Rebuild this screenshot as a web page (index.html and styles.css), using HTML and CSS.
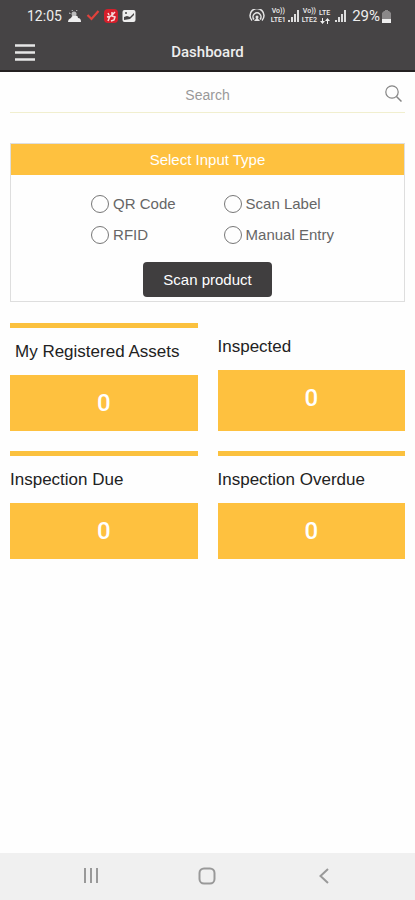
FILE: index.html
```html
<!DOCTYPE html>
<html lang="en">
<head>
<meta charset="utf-8">
<meta name="viewport" content="width=device-width, initial-scale=1">
<title>Dashboard</title>
<link rel="stylesheet" href="styles.css">
</head>
<body>
<header class="top">
  <div class="status">
    <div class="status-left">
      <span class="clock">12:05</span>
      <svg width="14" height="12" viewBox="0 0 14 12" aria-hidden="true"><circle cx="6" cy="4" r="2.500" fill="#bbb"/><path d="M0 12q0-3 3-4 1-3 4-2 3-1 3 2 3 0 3 4z" fill="#eee"/><path d="M1 3l1.500.5M4 0l.5 1M9 0l-.5 1" stroke="#ccc"/></svg>
      <svg width="14" height="12" viewBox="0 0 14 12" aria-hidden="true"><path d="M1.500 5l4 4 7-8" fill="none" stroke="#e0423c" stroke-width="2.200"/></svg>
      <svg width="14" height="14" viewBox="0 0 14 14" aria-hidden="true"><rect width="14" height="14" rx="4" fill="#d51f2b"/><path d="M4 4l1 2M3 8l4-1 4-4M6 7l-2 5M8 7l3 1-1 3-3 1M8 3v3" fill="none" stroke="#f7dada" stroke-width="1.500"/></svg>
      <svg width="14" height="12" viewBox="0 0 14 12" aria-hidden="true"><rect x=".5" width="13" height="12" rx="2" fill="#eee"/><path d="M2 10V7l3-1 3 1 4-4v2L8 9z" fill="#464445"/><circle cx="4" cy="3" r="1" fill="#464445"/></svg>
    </div>
    <div class="status-right">
      <svg class="hotspot" width="16" height="14" viewBox="0 0 16 14" fill="none" stroke="#e4e4e4" stroke-width="1.500" aria-hidden="true"><path d="M3 11.500a7 7 0 1 1 10 0M5 10.500a4 4 0 1 1 6 0"/><path d="M5 12l2.500-3h1l2.500 3z" fill="#e4e4e4" stroke="none"/><circle cx="8" cy="8" r="1.500" fill="#e4e4e4" stroke="none"/></svg>
      <span class="net"><span>Vo))</span><span>LTE1</span></span>
      <svg width="12" height="12" viewBox="0 0 12 12" fill="#ddd" aria-hidden="true"><path d="M0 10h2v2H0zM3 7h2v5H3zM6 4h2v8H6zM9 0h2v12H9z"/></svg>
      <span class="net"><span>Vo))</span><span>LTE2</span></span>
      <span class="net"><span>LTE</span><svg width="10" height="6" viewBox="0 0 10 6" fill="#eee" aria-hidden="true"><path d="M2 0h1v3h2L2.500 6 0 3h2zM7 6h1V3h2L7.500 0 5 3h2z"/></svg></span>
      <svg class="signal" width="12" height="12" viewBox="0 0 12 12" fill="#ddd" aria-hidden="true"><path d="M0 10h2v2H0zM3 7h2v5H3zM6 4h2v8H6zM9 0h2v12H9z"/></svg>
      <span class="battery">29%</span>
      <svg width="9" height="13" viewBox="0 0 9 13" aria-hidden="true"><path d="M3 0h3v1h1l2 2v6H0V3l2-2h1z" fill="#8a8889"/><path d="M0 9h9v4H0z" fill="#eee"/></svg>
    </div>
  </div>
  <div class="bar">
    <button class="menu" type="button" aria-label="Menu"><svg width="20" height="17" viewBox="0 0 20 17" aria-hidden="true"><path d="M0 1.500h20M0 8.500h20M0 15.500h20" stroke="#e6e6e6" stroke-width="2.500"/></svg></button>
    <h1>Dashboard</h1>
  </div>
</header>
<main>
  <form class="search" role="search">
    <input type="search" placeholder="Search" aria-label="Search">
    <button type="button" aria-label="Search"><svg width="18" height="18" viewBox="0 0 18 18" fill="none" stroke="#858585" aria-hidden="true"><circle cx="7" cy="7" r="6.200" stroke-width="1.200"/><path d="M11.500 11.500l5 5" stroke-width="1.500"/></svg></button>
  </form>
  <form class="panel">
    <h2>Select Input Type</h2>
    <div class="options">
      <label><input type="radio" name="kind">QR Code</label>
      <label><input type="radio" name="kind">Scan Label</label>
      <label><input type="radio" name="kind">RFID</label>
      <label><input type="radio" name="kind">Manual Entry</label>
    </div>
    <button class="scan" type="button">Scan product</button>
  </form>
  <div class="cards">
    <section class="card inset"><h3>My Registered Assets</h3><p>0</p></section>
    <section class="card plain"><h3>Inspected</h3><p>0</p></section>
    <section class="card"><h3>Inspection Due</h3><p>0</p></section>
    <section class="card"><h3>Inspection Overdue</h3><p>0</p></section>
  </div>
</main>
<nav class="keys" aria-label="System">
  <button type="button" aria-label="Recent apps"><svg width="18" height="18" viewBox="0 0 18 18" aria-hidden="true"><path d="M3 1v15M9 1v15M15 1v15" stroke="#999" stroke-width="2"/></svg></button>
  <button type="button" aria-label="Home"><svg width="18" height="18" viewBox="0 0 18 18" aria-hidden="true"><rect x="1.500" y="1.500" width="15" height="15" rx="4.500" fill="none" stroke="#999" stroke-width="2"/></svg></button>
  <button type="button" aria-label="Back"><svg width="18" height="18" viewBox="0 0 18 18" aria-hidden="true"><path d="M13 2L5.500 9l7.500 7" fill="none" stroke="#999" stroke-width="2"/></svg></button>
</nav>
</body>
</html>
```
FILE: styles.css
```css
* { box-sizing: border-box; }
body {
  margin: 0;
  min-height: 100vh;
  display: flex;
  flex-direction: column;
  background: #fefefe;
  color: #222;
  font-family: "Liberation Sans", Arial, sans-serif;
}
h1, h2, h3, p { margin: 0; font-weight: 400; }
button { border: 0; padding: 0; background: none; font: inherit; color: inherit; }
svg { display: block; flex: none; }

.top { background: #464445; color: #eee; border-bottom: 2px solid #242021; }
.status {
  display: flex;
  justify-content: space-between;
  align-items: center;
  height: 32px;
  padding: 0 24px 0 27px;
}
.status-left, .status-right { display: flex; align-items: center; }
.status-left { gap: 4px; }
.status-right { gap: 2px; }
.clock { margin-right: 2px; font: 14px/16px Roboto, sans-serif; }
.battery { font: 15px/16px Roboto, sans-serif; }
.hotspot { margin-right: 4px; }
.net {
  display: flex;
  flex-direction: column;
  align-items: center;
  font: 500 7px/9px Roboto, sans-serif;
}
.signal { margin: 0 3px; }
.bar {
  display: grid;
  grid-template-columns: 20px 1fr 20px;
  align-items: center;
  height: 38px;
  padding: 2px 15px 0;
}
.bar h1 { text-align: center; font: 500 15px/20px Roboto, sans-serif; }

main { flex: 1; padding: 0 10px; }
.search {
  display: grid;
  grid-template-columns: 20px 1fr 20px;
  align-items: center;
  height: 41px;
  border-bottom: 1px solid #f1efcf;
}
.search input {
  appearance: none;
  grid-column: 2;
  width: 100%;
  height: 32px;
  margin-top: 6px;
  padding: 0;
  border: 0;
  background: none;
  text-align: center;
  font: 14px/20px "Liberation Sans", Arial, sans-serif;
}
.search input::-webkit-search-cancel-button { display: none; }
.search input::placeholder { color: #999; opacity: 1; }
.search button { margin-top: 4px; }

.panel {
  display: flex;
  flex-direction: column;
  align-items: center;
  margin-top: 30px;
  padding-bottom: 4px;
  border: 1px solid #dedede;
}
.panel h2 {
  width: 100%;
  background: #fec13f;
  color: #fff;
  text-align: center;
  font-size: 15px;
  line-height: 31px;
}
.options {
  display: grid;
  grid-template-columns: auto auto;
  column-gap: 48px;
  row-gap: 11px;
  margin: 19px 0 17px;
  padding-left: 10px;
}
.options label {
  display: flex;
  align-items: center;
  gap: 4px;
  font-size: 15px;
  line-height: 20px;
  color: #666;
}
.options input {
  appearance: none;
  width: 18px;
  height: 18px;
  margin: 0;
  border: 1px solid #777;
  border-radius: 50%;
}
.options input:checked { box-shadow: inset 0 0 0 4px #fff; background: #464445; }
.scan {
  padding: 0 20px;
  border-radius: 4px;
  background: #403e3f;
  color: #fff;
  font-size: 15px;
  line-height: 35px;
}

.cards {
  display: grid;
  grid-template-columns: 1fr 1fr;
  gap: 20px;
  margin-top: 21px;
}
.card { display: flex; flex-direction: column; border-top: 5px solid #fbc13e; }
.card h3 { font-size: 17px; line-height: 47px; }
.card p {
  flex: 1;
  background: #fec13f;
  color: #fff;
  text-align: center;
  font: 500 24px/56px Roboto, sans-serif;
}
.inset h3 { padding-left: 5px; }
.plain { border-top: 0; }

.keys {
  display: grid;
  grid-template-columns: repeat(3, 1fr);
  justify-items: center;
  align-items: center;
  height: 47px;
  padding: 0 33px 2px;
  background: #f0f0f0;
}
```
